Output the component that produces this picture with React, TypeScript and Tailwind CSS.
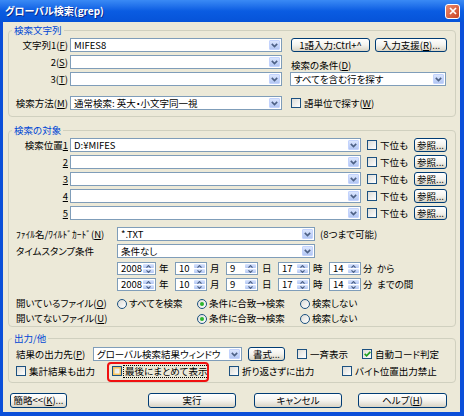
import React from "react";

// Windows XP style "グローバル検索(grep)" dialog

const K = ({ children }: { children: React.ReactNode }) => (
  <span className="underline decoration-1 underline-offset-[1px]">{children}</span>
);

function DropBtn() {
  return (
    <span className="flex h-full w-[11px] shrink-0 items-center justify-center rounded-[1px] border border-[#c3d3fd] bg-linear-to-b from-[#dbe6fe] to-[#b2c6f3]">
      <svg width="7" height="5" viewBox="0 0 7 5">
        <path d="M0.8 0.9 L3.5 3.6 L6.2 0.9" fill="none" stroke="#4d6185" strokeWidth="1.6" />
      </svg>
    </span>
  );
}

function Combo({ cls, value }: { cls: string; value?: string }) {
  return (
    <div className={`${cls} flex h-[14px] shrink-0 items-stretch border border-[#7f9db9] bg-white p-px`}>
      <span className="flex min-w-0 flex-1 items-center whitespace-nowrap pl-[2px] leading-[10px]">{value}</span>
      <DropBtn />
    </div>
  );
}

function SpinHalf({ up }: { up?: boolean }) {
  return (
    <span className="flex flex-1 items-center justify-center rounded-[1px] bg-linear-to-b from-[#dbe6fe] to-[#b2c6f3]">
      <svg width="5" height="3" viewBox="0 0 5 3">
        <path d={up ? "M0.5 2.6 L2.5 0.6 L4.5 2.6" : "M0.5 0.4 L2.5 2.4 L4.5 0.4"} fill="none" stroke="#4d6185" strokeWidth="1.2" />
      </svg>
    </span>
  );
}

function Spin({ cls, value }: { cls: string; value: string }) {
  return (
    <div className={`${cls} flex h-[13px] shrink-0 items-stretch border border-[#7f9db9] bg-white p-px`}>
      <span className="flex flex-1 items-center pl-[2px] leading-[9px]">{value}</span>
      <span className="flex w-[11px] flex-col gap-px">
        <SpinHalf up />
        <SpinHalf />
      </span>
    </div>
  );
}

function Btn({ cls, children }: { cls: string; children: React.ReactNode }) {
  return (
    <button
      type="button"
      className={`${cls} flex shrink-0 items-center justify-center whitespace-nowrap rounded-[3px] border border-[#003c74] bg-linear-to-b from-white via-[#f4f3ee] to-[#d9d4c5] leading-[11px]`}
    >
      {children}
    </button>
  );
}

function Check({ cls = "", checked, hot }: { cls?: string; checked?: boolean; hot?: boolean }) {
  return (
    <span
      className={`${cls} flex h-[10px] w-[10px] shrink-0 items-center justify-center border border-[#1c5180] bg-linear-to-br from-[#dcdcd7] to-white ${
        hot ? "shadow-[inset_0_0_0_1.5px_#f9c35c]" : ""
      }`}
    >
      {checked && (
        <svg width="7" height="6" viewBox="0 0 7 6">
          <path d="M0.7 2.8 L2.6 4.8 L6.3 0.9" fill="none" stroke="#21a121" strokeWidth="1.7" />
        </svg>
      )}
    </span>
  );
}

function Radio({ on }: { on?: boolean }) {
  return (
    <span className="flex h-[10px] w-[10px] shrink-0 items-center justify-center rounded-full border border-[#1c5180] bg-linear-to-br from-[#dcdcd7] to-white">
      {on && <span className="h-[4px] w-[4px] rounded-full bg-[#2cb52c]" />}
    </span>
  );
}

function Group({ label, cls, children }: { label: string; cls: string; children: React.ReactNode }) {
  return (
    <div className={`relative ml-[5px] w-[448px] rounded-[4px] border border-[#d0d0bf] ${cls}`}>
      <span className="absolute left-[3px] top-[-7px] bg-[#ece9d8] px-[2px] leading-[12px] text-[#0046d5]">{label}</span>
      {children}
    </div>
  );
}

export default function App() {
  return (
    <div className="h-[416px] w-[464px] overflow-hidden bg-[#0b4fd9] font-['Noto_Sans_CJK_JP',sans-serif] text-[9.5px] text-black [font-feature-settings:'palt']">
      {/* title bar */}
      <div className="flex h-[22px] items-center justify-between bg-linear-to-b from-[#3a8af5] via-[#0a5ce2] to-[#0653d8] pl-[5px] pr-[4px]">
        <span className="text-[10px] font-bold leading-[12px] text-white [text-shadow:1px_1px_#0b2a8a]">グローバル検索(grep)</span>
        <span className="flex h-[15px] w-[15px] items-center justify-center rounded-[3px] border border-white bg-linear-to-br from-[#ec8a6c] to-[#c8411f]">
          <svg width="8" height="8" viewBox="0 0 8 8">
            <path d="M1 1 L7 7 M7 1 L1 7" stroke="white" strokeWidth="1.7" />
          </svg>
        </span>
      </div>

      <div className="ml-[3px] flex h-[390px] w-[457px] flex-col bg-[#ece9d8]">
        {/* 検索文字列 */}
        <Group label="検索文字列" cls="mt-[8px] flex flex-col pb-[6px] pt-[7px]">
          <div className="flex h-[14px] items-center">
            <span className="w-[59px] text-right">文字列1(<K>F</K>)</span>
            <Combo cls="ml-[2px] w-[212px]" value="MIFES8" />
            <Btn cls="ml-[9px] h-[14px] w-[79px]">1語入力:Ctrl+^</Btn>
            <Btn cls="ml-[5px] h-[14px] w-[72px]">
              入力支援(<K>R</K>)...
            </Btn>
          </div>
          <div className="mt-[3px] flex h-[14px] items-center">
            <span className="w-[59px] text-right">
              2(<K>S</K>)
            </span>
            <Combo cls="ml-[2px] w-[212px]" />
            <span className="ml-[9px] mt-[6px]">
              検索の条件(<K>D</K>)
            </span>
          </div>
          <div className="mt-[3px] flex h-[14px] items-center">
            <span className="w-[59px] text-right">
              3(<K>T</K>)
            </span>
            <Combo cls="ml-[2px] w-[212px]" />
            <Combo cls="ml-[8px] w-[156px]" value="すべてを含む行を探す" />
          </div>
          <div className="mt-[10px] flex h-[14px] items-center">
            <span className="w-[59px] text-right">
              検索方法(<K>M</K>)
            </span>
            <Combo cls="ml-[2px] w-[212px]" value="通常検索: 英大・小文字同一視" />
            <Check cls="ml-[9px]" />
            <span className="ml-[3px]">
              語単位で探す(<K>W</K>)
            </span>
          </div>
        </Group>

        {/* 検索の対象 */}
        <Group label="検索の対象" cls="mt-[13px] flex flex-col pb-[1px] pt-[7px]">
          {[1, 2, 3, 4, 5].map((n) => (
            <div key={n} className={`${n > 1 ? "mt-[3px]" : ""} flex h-[14px] items-center`}>
              <span className="w-[59px] text-right">
                {n === 1 ? (
                  <>
                    検索位置<K>1</K>
                  </>
                ) : (
                  <K>{n}</K>
                )}
              </span>
              <Combo cls="ml-[2px] w-[291px]" value={n === 1 ? "D:¥MIFES" : ""} />
              <Check cls="ml-[6px]" />
              <span className="ml-[3px] w-[28px]">下位も</span>
              <Btn cls="ml-[6px] h-[14px] w-[33px]">参照...</Btn>
            </div>
          ))}
          <div className="mt-[7px] flex h-[14px] items-center pl-[7px]">
            <span className="w-[101px] whitespace-nowrap">
              ﾌｧｲﾙ名/ﾜｲﾙﾄﾞｶｰﾄﾞ(<K>N</K>)
            </span>
            <Combo cls="w-[198px]" value="*.TXT" />
            <span className="ml-[5px]">(8つまで可能)</span>
          </div>
          <div className="mt-[3px] flex h-[14px] items-center pl-[7px]">
            <span className="w-[101px]">タイムスタンプ条件</span>
            <Combo cls="w-[198px]" value="条件なし" />
          </div>
          {["から", "までの間"].map((tail, i) => (
            <div key={tail} className={`${i === 0 ? "mt-[4px]" : "mt-[3px]"} flex h-[13px] items-center pl-[108px]`}>
              <Spin cls="w-[39px]" value="2008" />
              <span className="w-[19px] pl-[3px]">年</span>
              <Spin cls="w-[32px]" value="10" />
              <span className="w-[19px] pl-[3px]">月</span>
              <Spin cls="w-[32px]" value="9" />
              <span className="w-[20px] pl-[4px]">日</span>
              <Spin cls="w-[32px]" value="17" />
              <span className="w-[19px] pl-[3px]">時</span>
              <Spin cls="w-[32px]" value="14" />
              <span className="w-[16px] pl-[2px]">分</span>
              <span>{tail}</span>
            </div>
          ))}
          <div className="mt-[6px] flex h-[13px] items-center pl-[7px]">
            <span className="w-[101px]">
              開いているファイル(<K>O</K>)
            </span>
            <Radio />
            <span className="ml-[2px] w-[68px]">すべてを検索</span>
            <Radio on />
            <span className="ml-[2px] w-[91px]">条件に合致→検索</span>
            <Radio />
            <span className="ml-[2px]">検索しない</span>
          </div>
          <div className="mt-[2px] flex h-[13px] items-center pl-[7px]">
            <span className="w-[181px]">
              開いてないファイル(<K>U</K>)
            </span>
            <Radio on />
            <span className="ml-[2px] w-[91px]">条件に合致→検索</span>
            <Radio />
            <span className="ml-[2px]">検索しない</span>
          </div>
        </Group>

        {/* 出力/他 */}
        <Group label="出力/他" cls="mt-[11px] flex flex-col pb-[4px] pt-[8px]">
          <div className="flex h-[14px] items-center pl-[7px]">
            <span className="w-[77px]">
              結果の出力先(<K>P</K>)
            </span>
            <Combo cls="w-[149px]" value="グローバル検索結果ウィンドウ" />
            <Btn cls="ml-[6px] h-[14px] w-[37px]">書式...</Btn>
            <Check cls="ml-[12px]" />
            <span className="ml-[3px] w-[52px]">一斉表示</span>
            <Check checked />
            <span className="ml-[3px]">自動コード判定</span>
          </div>
          <div className="mt-[3px] flex h-[14px] items-center pl-[7px]">
            <Check />
            <span className="ml-[3px] w-[83px]">集計結果も出力</span>
            <span className="relative flex h-full w-[117px] items-center">
              <span className="absolute left-[-5px] top-[-2px] h-[20px] w-[102px] rounded-[4px] border-2 border-[#f01010]" />
              <Check hot />
              <span className="ml-[2px] px-px leading-[11px] outline-1 outline-dotted outline-black">最後にまとめて表示</span>
            </span>
            <Check />
            <span className="ml-[3px] w-[100px]">折り返さずに出力</span>
            <Check />
            <span className="ml-[3px]">バイト位置出力禁止</span>
          </div>
        </Group>

        {/* buttons */}
        <div className="mt-[10px] flex h-[15px] pl-[7px]">
          <Btn cls="h-[15px] w-[57px]">
            簡略&lt;&lt;(<K>K</K>)...
          </Btn>
          <Btn cls="ml-[81px] h-[15px] w-[88px]">実行</Btn>
          <Btn cls="ml-[18px] h-[15px] w-[88px]">キャンセル</Btn>
          <Btn cls="ml-[16px] h-[15px] w-[89px]">
            ヘルプ(<K>H</K>)
          </Btn>
        </div>
      </div>
    </div>
  );
}
